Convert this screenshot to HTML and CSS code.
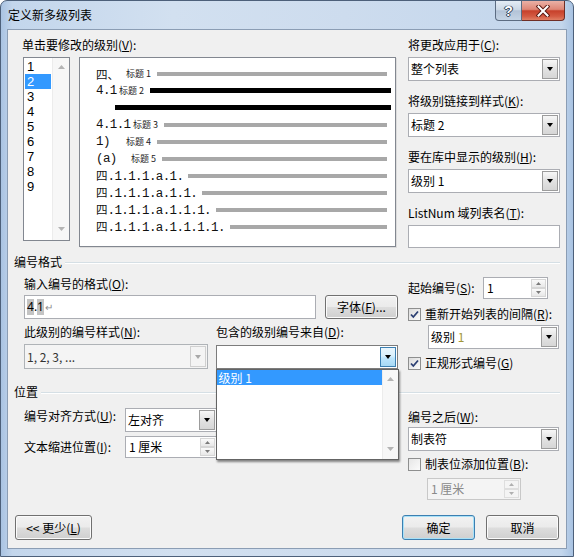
FILE: index.html
```html
<!DOCTYPE html>
<html lang="zh-CN">
<head>
<meta charset="utf-8">
<title>定义新多级列表</title>
<link rel="stylesheet" href="styles.css">
</head>
<body>
<div class="window">
  <div class="titlebar">
    <span class="title">定义新多级列表</span>
    <div class="caps">
      <span class="cap help">?</span>
      <span class="cap close"><svg width="14" height="12" viewBox="0 0 14 12"><path d="M2.5 1.5 L11.5 10.5 M11.5 1.5 L2.5 10.5" stroke="#5a1a12" stroke-width="4" stroke-linecap="square"/><path d="M2.5 1.5 L11.5 10.5 M11.5 1.5 L2.5 10.5" stroke="#fff" stroke-width="2" stroke-linecap="square"/></svg></span>
    </div>
  </div>
  <div class="client">
    <div class="top">
      <div class="levels">
        <div class="label">单击要修改的级别(<u>V</u>):</div>
        <div class="lvrow">
          <div class="lvlist">
            <div class="lvitems">
              <div class="lv">1</div>
              <div class="lv sel">2</div>
              <div class="lv">3</div>
              <div class="lv">4</div>
              <div class="lv">5</div>
              <div class="lv">6</div>
              <div class="lv">7</div>
              <div class="lv">8</div>
              <div class="lv">9</div>
            </div>
            <div class="vsb">
              <svg width="7" height="4" viewBox="0 0 7 4"><path d="M0 4 L3.5 0 L7 4 Z" fill="#b4b4b4"/></svg>
              <svg width="7" height="4" viewBox="0 0 7 4"><path d="M0 0 L3.5 4 L7 0 Z" fill="#b4b4b4"/></svg>
            </div>
          </div>
          <div class="preview">
            <div class="pv"><span class="pn cj w1">四、</span><span class="ps">标题 1</span><span class="bar"></span></div>
            <div class="pv"><span class="pn w2">4.1</span><span class="ps">标题 2</span><span class="bar blk"></span></div>
            <div class="pv"><span class="bar blk ind"></span></div>
            <div class="pv"><span class="pn w4">4.1.1</span><span class="ps">标题 3</span><span class="bar"></span></div>
            <div class="pv"><span class="pn w5">1)</span><span class="ps">标题 4</span><span class="bar"></span></div>
            <div class="pv"><span class="pn w6">(a)</span><span class="ps">标题 5</span><span class="bar"></span></div>
            <div class="pv"><span class="pn w7"><span class="cj">四</span>.1.1.1.a.1.</span><span class="bar"></span></div>
            <div class="pv"><span class="pn w8"><span class="cj">四</span>.1.1.1.a.1.1.</span><span class="bar"></span></div>
            <div class="pv"><span class="pn w9"><span class="cj">四</span>.1.1.1.a.1.1.1.</span><span class="bar"></span></div>
            <div class="pv"><span class="pn w10"><span class="cj">四</span>.1.1.1.a.1.1.1.1.</span><span class="bar"></span></div>
          </div>
        </div>
      </div>
      <div class="rcol">
        <div class="label">将更改应用于(<u>C</u>):</div>
        <div class="combo gap4"><span class="ctext">整个列表</span><span class="dd"><i class="tri"></i></span></div>
        <div class="label gap12">将级别链接到样式(<u>K</u>):</div>
        <div class="combo gap4"><span class="ctext">标题 2</span><span class="dd"><i class="tri"></i></span></div>
        <div class="label gap12">要在库中显示的级别(<u>H</u>):</div>
        <div class="combo gap4"><span class="ctext">级别 1</span><span class="dd"><i class="tri"></i></span></div>
        <div class="label gap12">ListNum 域列表名(<u>T</u>):</div>
        <div class="tbox gap4 listnum"></div>
      </div>
    </div>

    <div class="ghead g1"><span>编号格式</span></div>
    <div class="fmt">
      <div class="fmt-left">
        <div class="label gap6">输入编号的格式(<u>O</u>):</div>
        <div class="frow gap3">
          <div class="tbox numfmt"><span class="fld">4</span>.<span class="fld">1</span><span class="ret">↵</span></div>
          <div class="btn fontbtn">字体(<u>F</u>)...</div>
        </div>
        <div class="frow gap5">
          <div class="label lab-a">此级别的编号样式(<u>N</u>):</div>
          <div class="label">包含的级别编号来自(<u>D</u>):</div>
        </div>
        <div class="frow gap4">
          <div class="combo dis comboA"><span class="ctext">1, 2, 3, ...</span><span class="dd"><i class="tri"></i></span></div>
          <div class="combo open comboB"><span class="ctext"></span><span class="dd hot"><i class="tri"></i></span>
            <div class="droplist">
              <div class="ditems"><div class="ditem sel">级别 1</div></div>
              <div class="vsb dvsb">
                <svg width="7" height="4" viewBox="0 0 7 4"><path d="M0 4 L3.5 0 L7 4 Z" fill="#b4b4b4"/></svg>
                <svg width="7" height="4" viewBox="0 0 7 4"><path d="M0 0 L3.5 4 L7 0 Z" fill="#b4b4b4"/></svg>
              </div>
            </div>
          </div>
        </div>
      </div>
      <div class="fmt-right">
        <div class="frow gap7 startrow">
          <div class="label startlab">起始编号(<u>S</u>):</div>
          <div class="spin startspin"><span class="stext">1</span><span class="sbtns"><span class="sb"><svg width="5" height="3" viewBox="0 0 5 3"><path d="M0 3 L2.5 0 L5 3Z" fill="#7a7a7a"/></svg></span><span class="sb"><svg width="5" height="3" viewBox="0 0 5 3"><path d="M0 0 L2.5 3 L5 0Z" fill="#7a7a7a"/></svg></span></span></div>
        </div>
        <div class="check gap7"><span class="box"><svg width="11" height="11" viewBox="0 0 11 11"><path d="M2 5.5 L4.3 8 L9 2.5" fill="none" stroke="#2b3f73" stroke-width="1.8"/></svg></span><span>重新开始列表的间隔(<u>R</u>):</span></div>
        <div class="combo gap3 restart"><span class="ctext">级别 <span class="olive">1</span></span><span class="dd"><i class="tri"></i></span></div>
        <div class="check gap6"><span class="box"><svg width="11" height="11" viewBox="0 0 11 11"><path d="M2 5.5 L4.3 8 L9 2.5" fill="none" stroke="#2b3f73" stroke-width="1.8"/></svg></span><span>正规形式编号(<u>G</u>)</span></div>
      </div>
    </div>

    <div class="ghead g2"><span>位置</span></div>
    <div class="pos">
      <div class="pos-left">
        <div class="prow gap8">
          <div class="label plab">编号对齐方式(<u>U</u>):</div>
          <div class="combo poscombo"><span class="ctext">左对齐</span><span class="dd"><i class="tri"></i></span></div>
        </div>
        <div class="prow gap4 mid">
          <div class="label plab">文本缩进位置(<u>I</u>):</div>
          <div class="spin posspin"><span class="stext">1 厘米</span><span class="sbtns"><span class="sb"><svg width="5" height="3" viewBox="0 0 5 3"><path d="M0 3 L2.5 0 L5 3Z" fill="#7a7a7a"/></svg></span><span class="sb"><svg width="5" height="3" viewBox="0 0 5 3"><path d="M0 0 L2.5 3 L5 0Z" fill="#7a7a7a"/></svg></span></span></div>
        </div>
      </div>
      <div class="pos-right">
        <div class="label gap9">编号之后(<u>W</u>):</div>
        <div class="combo gap2 after"><span class="ctext">制表符</span><span class="dd"><i class="tri"></i></span></div>
        <div class="check gap5"><span class="box off"></span><span>制表位添加位置(<u>B</u>):</span></div>
        <div class="spin dis gap6 tabspin"><span class="stext">1 厘米</span><span class="sbtns"><span class="sb"><svg width="5" height="3" viewBox="0 0 5 3"><path d="M0 3 L2.5 0 L5 3Z" fill="#b0b0b0"/></svg></span><span class="sb"><svg width="5" height="3" viewBox="0 0 5 3"><path d="M0 0 L2.5 3 L5 0Z" fill="#b0b0b0"/></svg></span></span></div>
      </div>
    </div>

    <div class="buttons">
      <div class="btn lessbtn">&lt;&lt; 更少(<u>L</u>)</div>
      <div class="btn okbtn">确定</div>
      <div class="btn cancelbtn">取消</div>
    </div>
  </div>
</div>
</body>
</html>
```

FILE: styles.css
```css
* { box-sizing: border-box; }
html, body { margin: 0; padding: 0; }
body {
  width: 574px;
  height: 557px;
  overflow: hidden;
  background: #ffffff;
  font-family: "Noto Sans CJK SC", "Noto Sans", sans-serif;
  font-size: 12px;
  line-height: 16px;
  color: #000;
}
u { text-decoration: underline; text-underline-offset: 1px; }

.window {
  width: 574px;
  height: 557px;
  display: flex;
  flex-direction: column;
  border: 1px solid #4d607a;
  border-radius: 7px 7px 0 0;
  background: linear-gradient(90deg, #a9c3e2 0%, #c3d6ec 2%, #d2e0f0 30%, #cddcee 60%, #c3d6ec 98%, #a9c3e2 100%);
}

.titlebar {
  height: 28px;
  display: flex;
  align-items: center;
  padding-left: 7px;
  padding-right: 8px;
}
.title { font-size: 12px; color: #000; }
.caps {
  margin-left: auto;
  align-self: flex-start;
  display: flex;
}
.cap {
  height: 20px;
  display: flex;
  align-items: center;
  justify-content: center;
  border: 1px solid #5c6c82;
  border-top: none;
}
.help {
  width: 27px;
  border-radius: 0 0 0 4px;
  background: linear-gradient(#e4ecf5 0%, #ccd8e6 45%, #b3c3d7 52%, #c5d4e5 100%);
  color: #fff;
  font-family: "Liberation Sans", sans-serif;
  font-weight: bold;
  font-size: 14px;
  line-height: 16px;
  text-shadow: 0 0 1px #24334a, 0 0 1px #24334a, 1px 0 0 #3f5068, -1px 0 0 #3f5068, 0 1px 0 #3f5068;
}
.close {
  width: 43px;
  border-left: none;
  border-color: #6f2e26;
  border-radius: 0 0 4px 0;
  background: linear-gradient(#eab1a6 0%, #de8676 44%, #c7412b 52%, #d35a42 80%, #e07f64 100%);
}

.client {
  flex: 1;
  margin: 0 6px 7px;
  border: 1px solid #8b9db4;
  background: #f0f0f0;
  padding: 7px 6px 8px;
  display: flex;
  flex-direction: column;
}

.label { height: 16px; white-space: nowrap; }
.gap2 { margin-top: 2px; }
.gap3 { margin-top: 3px; }
.gap4 { margin-top: 4px; }
.gap5 { margin-top: 5px; }
.gap6 { margin-top: 6px; }
.gap7 { margin-top: 7px; }
.gap8 { margin-top: 8px; }
.gap9 { margin-top: 9px; }
.gap12 { margin-top: 12px; }

/* top section */
.top { display: flex; height: 211px; }
.levels { margin-left: 8px; width: 374px; }
.lvrow { display: flex; margin-top: 4px; }
.lvlist {
  margin-left: 1px;
  width: 47px;
  height: 184px;
  border: 1px solid #828790;
  background: #fff;
  display: flex;
}
.lvitems { flex: 1; padding: 1px 1px 0; }
.lv {
  height: 15px;
  line-height: 15px;
  padding-left: 2px;
  font-family: "Liberation Sans", sans-serif;
  font-size: 13px;
}
.lv.sel { background: #3399ff; color: #fff; }
.vsb {
  width: 17px;
  background: #f7f7f7;
  border-left: 1px solid #ececec;
  display: flex;
  flex-direction: column;
  justify-content: space-between;
  align-items: center;
  padding: 7px 0 9px;
}

.preview {
  margin-left: 9px;
  width: 317px;
  height: 190px;
  border: 1px solid #828790;
  box-shadow: 1px 1px 0 #dcdcdc;
  background: #fff;
  padding-top: 7px;
  padding-left: 16px;
}
.pv {
  height: 17px;
  display: flex;
  align-items: center;
}
.pn {
  flex: none;
  font-family: "Liberation Mono", monospace;
  font-size: 12.5px;
  letter-spacing: -0.6px;
  line-height: 14px;
  color: #111;
  white-space: nowrap;
}
.cj {
  font-family: "Noto Sans CJK SC", sans-serif;
  font-size: 11.5px;
  letter-spacing: 0;
  line-height: 14px;
}
.w1 { width: 30px; }
.w2 { width: 23px; }
.w4 { width: 37px; }
.w5 { width: 30px; }
.w6 { width: 35px; }
.w7 { width: 92px; }
.w8 { width: 106px; }
.w9 { width: 120px; }
.w10 { width: 134px; }
.ps {
  flex: none;
  width: 31px;
  font-size: 9px;
  line-height: 12px;
  color: #222;
  white-space: nowrap;
}
.bar {
  flex: 1;
  height: 4px;
  background: #a8a8a8;
  margin-right: 8px;
}
.bar.blk { height: 5px; background: #000; margin-right: 4px; }
.bar.ind { margin-left: 19px; }

.rcol { margin-left: auto; width: 152px; }

.combo {
  display: flex;
  align-items: center;
  height: 24px;
  background: #fff;
  border: 1px solid #abadb3;
  padding-left: 2px;
  position: relative;
  white-space: nowrap;
}
.ctext { flex: 1; }
.dd {
  width: 16px;
  align-self: stretch;
  margin: 1px;
  border: 1px solid #9c9c9c;
  background: linear-gradient(#f7f7f7, #e2e2e2 50%, #d6d6d6);
  display: flex;
  align-items: center;
  justify-content: center;
}
.tri {
  width: 0;
  height: 0;
  border-left: 3.5px solid transparent;
  border-right: 3.5px solid transparent;
  border-top: 4px solid #000;
}
.olive { color: #a29638; }

.tbox {
  height: 24px;
  background: #fff;
  border: 1px solid #abadb3;
}
.listnum { height: 23px; }

/* group headers */
.ghead { display: flex; align-items: center; height: 16px; }
.ghead::after {
  content: "";
  flex: 1;
  height: 1px;
  margin-left: 3px;
  background: #d5dfe5;
  box-shadow: 0 1px 0 #ffffff;
}
.g1 { margin-top: 6px; }
.g2 { margin-top: 13px; }

/* numbering format */
.fmt { display: flex; }
.fmt-left { width: 384px; padding-left: 10px; }
.fmt-right { margin-left: auto; width: 152px; }
.frow { display: flex; align-items: center; }
.numfmt {
  width: 292px;
  display: flex;
  align-items: center;
  padding-left: 2px;
  font-family: "Noto Sans", sans-serif;
  font-size: 12px;
}
.fld { background: #c4c4c4; }
.ret { color: #8d8d8d; font-size: 10px; margin-left: 1px; }
.btn {
  height: 24px;
  display: flex;
  align-items: center;
  justify-content: center;
  border: 1px solid #707070;
  border-radius: 3px;
  background: linear-gradient(#f2f2f2 0%, #ebebeb 48%, #dddddd 52%, #cfcfcf 100%);
  box-shadow: inset 0 0 0 1px #fbfbfb;
  white-space: nowrap;
}
.fontbtn { width: 73px; margin-left: 9px; }
.lab-a { width: 192px; }
.comboA { width: 184px; height: 25px; }
.comboB { width: 183px; margin-left: 8px; }
.combo.dis { background: #f4f4f4; border-color: #afb3b7; color: #333; }
.combo.dis .dd { border-color: #d0d0d0; background: #f4f4f4; }
.combo.dis .tri { border-top-color: #a8a8a8; }
.combo.open { border-color: #7c7c7c; }
.dd.hot {
  border-color: #3c7fb1;
  background: linear-gradient(#eaf6fd 0%, #d9f0fc 45%, #bee6fd 55%, #a7d9f5 100%);
}
.droplist {
  position: absolute;
  left: -1px;
  top: 23px;
  width: 183px;
  height: 91px;
  border: 1px solid #646464;
  background: #fff;
  box-shadow: 1px 2px 2px rgba(0, 0, 0, 0.45);
  display: flex;
  z-index: 10;
}
.ditems { flex: 1; }
.ditem { height: 15px; line-height: 15px; padding-left: 2px; }
.ditem.sel { background: #3399ff; color: #fff; }
.dvsb { width: 16px; padding: 7px 0 8px; }

.startlab { width: 75px; }
.spin {
  height: 22px;
  display: flex;
  align-items: center;
  background: #fff;
  border: 1px solid #abadb3;
  padding-left: 3px;
  white-space: nowrap;
}
.stext { flex: 1; }
.sbtns {
  width: 15px;
  align-self: stretch;
  margin: 1px;
  display: flex;
  flex-direction: column;
}
.sb {
  flex: 1;
  border: 1px solid #d6d6d6;
  background: linear-gradient(#fafafa, #e8e8e8);
  display: flex;
  align-items: center;
  justify-content: center;
}
.startspin { width: 65px; }

.check { display: flex; align-items: center; height: 16px; white-space: nowrap; }
.box {
  width: 13px;
  height: 13px;
  margin-right: 4px;
  border: 1px solid #8e8f8f;
  background: linear-gradient(135deg, #dcdcdc, #fbfbfb);
  display: flex;
  align-items: center;
  justify-content: center;
}
.box.off { background: linear-gradient(135deg, #e6e6e6, #fbfbfb); }
.restart { margin-left: 20px; width: 131px; }

/* position */
.pos { display: flex; }
.pos-left { width: 384px; padding-left: 10px; }
.pos-right { margin-left: auto; width: 152px; }
.prow { display: flex; align-items: flex-start; }
.prow.mid { align-items: center; }
.plab { width: 101px; }
.poscombo { width: 92px; }
.posspin { width: 92px; height: 22px; }
.after { width: 151px; }
.tabspin { margin-left: 19px; width: 94px; }
.spin.dis { background: #f4f4f4; border-color: #c8c8c8; color: #8a8a8a; }
.spin.dis .sb { border-color: #dedede; background: #f4f4f4; }

/* buttons */
.buttons { margin-top: auto; display: flex; height: 25px; }
.buttons .btn { height: 25px; }
.lessbtn { width: 77px; margin-left: 1px; }
.okbtn {
  width: 73px;
  margin-left: auto;
  border-color: #3c7fb1;
  box-shadow: inset 0 0 0 1px #a8e1f8;
}
.cancelbtn { width: 73px; margin-left: 11px; margin-right: 1px; }
```
